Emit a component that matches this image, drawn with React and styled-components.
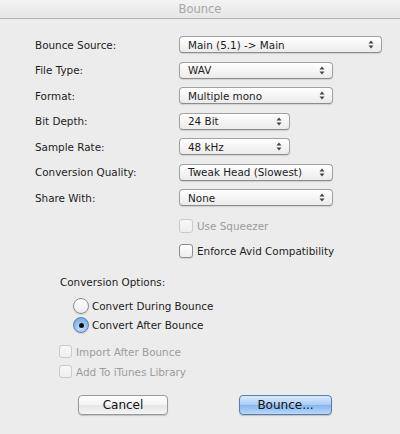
import React from "react";
import styled, { createGlobalStyle } from "styled-components";

const GlobalStyle = createGlobalStyle`
  body {
    margin: 0;
    background: #ececec;
    font-family: "DejaVu Sans", "Liberation Sans", sans-serif;
    color: #1c1c1c;
  }
`;

const Window = styled.div`
  width: 400px;
  height: 434px;
  background: #ececec;
  display: flex;
  flex-direction: column;
  overflow: hidden;
`;

const TitleBar = styled.div`
  height: 18px;
  border-bottom: 1px solid #b4b4b4;
  background: linear-gradient(#f3f3f3, #e6e6e6);
  display: flex;
  align-items: center;
  justify-content: center;
  font-size: 11.5px;
  color: #a6a6a6;
`;

const Content = styled.div`
  padding-top: 17px;
  display: flex;
  flex-direction: column;
`;

const FormGrid = styled.div`
  display: grid;
  grid-template-columns: 144px 1fr;
  grid-auto-rows: 17px;
  row-gap: 8.5px;
  padding-left: 35px;
  font-size: 10.4px;
`;

const Label = styled.div`
  display: flex;
  align-items: center;
`;

const Popup = styled.div`
  box-sizing: border-box;
  width: ${(p) => p.$w}px;
  height: 17px;
  border: 1px solid #a2a2a2;
  border-bottom-color: #8c8c8c;
  border-radius: 4px;
  background: linear-gradient(#ffffff, #f4f4f4 55%, #ebebeb);
  box-shadow: 0 1px 1px rgba(0, 0, 0, 0.12);
  display: flex;
  align-items: center;
  justify-content: space-between;
  padding: 0 7px 0 8px;
  font-size: 10.4px;
`;

const Arrows = () => (
  <svg width="6" height="9" viewBox="0 0 6 9">
    <path d="M3 0.5 L5.5 3.5 L0.5 3.5 Z" fill="#444" />
    <path d="M3 8.5 L5.5 5.5 L0.5 5.5 Z" fill="#444" />
  </svg>
);

const CheckGroup = styled.div`
  display: flex;
  flex-direction: column;
  gap: 11px;
  padding-left: ${(p) => p.$left}px;
  margin-top: ${(p) => p.$top}px;
`;

const CheckRow = styled.label`
  display: flex;
  align-items: center;
  gap: 4px;
  height: ${(p) => p.$h}px;
  font-size: 10.4px;
  color: ${(p) => (p.$disabled ? "#9c9c9c" : "#1c1c1c")};
`;

const Box = styled.span`
  box-sizing: border-box;
  width: ${(p) => p.$s}px;
  height: ${(p) => p.$s}px;
  border: 1px solid ${(p) => (p.$disabled ? "#cbcbcb" : "#8f8f8f")};
  border-radius: 3px;
  background: ${(p) =>
    p.$disabled ? "linear-gradient(#f7f7f7, #efefef)" : "linear-gradient(#ffffff, #ececec)"};
  box-shadow: ${(p) => (p.$disabled ? "none" : "0 1px 1px rgba(0,0,0,0.1)")};
`;

const SectionTitle = styled.div`
  margin-top: 17px;
  padding-left: 60px;
  font-size: 10.4px;
  height: 14px;
  line-height: 14px;
`;

const RadioGroup = styled.div`
  margin-top: 9px;
  padding-left: 73px;
  display: flex;
  flex-direction: column;
  gap: 3px;
`;

const RadioRow = styled.label`
  display: flex;
  align-items: center;
  gap: 3px;
  height: 16px;
  font-size: 10.4px;
`;

const Radio = styled.span`
  box-sizing: border-box;
  width: 16px;
  height: 16px;
  border-radius: 50%;
  border: 1px solid ${(p) => (p.$on ? "#5d7fae" : "#8c8c8c")};
  background: ${(p) =>
    p.$on
      ? "radial-gradient(circle at 50% 70%, #cfe4fb, #8dbbf0 55%, #6c9fdc)"
      : "linear-gradient(#ffffff, #ebebeb)"};
  box-shadow: 0 1px 1px rgba(0, 0, 0, 0.12);
  display: flex;
  align-items: center;
  justify-content: center;
  &::after {
    content: "";
    display: ${(p) => (p.$on ? "block" : "none")};
    width: 5px;
    height: 5px;
    border-radius: 50%;
    background: #111;
  }
`;

const LowerChecks = styled.div`
  margin-top: 12px;
  padding-left: 59px;
  display: flex;
  flex-direction: column;
  gap: 7px;
`;

const ButtonRow = styled.div`
  margin-top: 17px;
  padding-left: 78px;
  display: flex;
  gap: 71px;
`;

const Button = styled.button`
  box-sizing: border-box;
  width: ${(p) => p.$w}px;
  height: 20px;
  border-radius: 4px;
  border: 1px solid ${(p) => (p.$primary ? "#5a7ca8" : "#999")};
  background: ${(p) =>
    p.$primary
      ? "linear-gradient(#dcebfc, #a9cdf6 48%, #86b6f0 52%, #b8d9fb)"
      : "linear-gradient(#ffffff, #f3f3f3 50%, #e6e6e6 52%, #f4f4f4)"};
  box-shadow: 0 1px 1px rgba(0, 0, 0, 0.18);
  font-family: "DejaVu Sans", "Liberation Sans", sans-serif;
  font-size: 12px;
  color: #111;
  padding: 0;
`;

const rows = [
  ["Bounce Source:", "Main (5.1) -> Main", 203],
  ["File Type:", "WAV", 154],
  ["Format:", "Multiple mono", 154],
  ["Bit Depth:", "24 Bit", 111],
  ["Sample Rate:", "48 kHz", 111],
  ["Conversion Quality:", "Tweak Head (Slowest)", 154],
  ["Share With:", "None", 154],
];

export default function App() {
  return (
    <Window>
      <GlobalStyle />
      <TitleBar>Bounce</TitleBar>
      <Content>
        <FormGrid>
          {rows.map(([label, value, w]) => (
            <React.Fragment key={label}>
              <Label>{label}</Label>
              <Popup $w={w}>
                <span>{value}</span>
                <Arrows />
              </Popup>
            </React.Fragment>
          ))}
        </FormGrid>

        <CheckGroup $left={179} $top={13}>
          <CheckRow $h={14} $disabled>
            <Box $s={14} $disabled />
            Use Squeezer
          </CheckRow>
          <CheckRow $h={14}>
            <Box $s={14} />
            Enforce Avid Compatibility
          </CheckRow>
        </CheckGroup>

        <SectionTitle>Conversion Options:</SectionTitle>
        <RadioGroup>
          <RadioRow>
            <Radio />
            Convert During Bounce
          </RadioRow>
          <RadioRow>
            <Radio $on />
            Convert After Bounce
          </RadioRow>
        </RadioGroup>

        <LowerChecks>
          <CheckRow $h={13} $disabled>
            <Box $s={13} $disabled />
            Import After Bounce
          </CheckRow>
          <CheckRow $h={13} $disabled>
            <Box $s={13} $disabled />
            Add To iTunes Library
          </CheckRow>
        </LowerChecks>

        <ButtonRow>
          <Button $w={90}>Cancel</Button>
          <Button $w={93} $primary>
            Bounce...
          </Button>
        </ButtonRow>
      </Content>
    </Window>
  );
}
